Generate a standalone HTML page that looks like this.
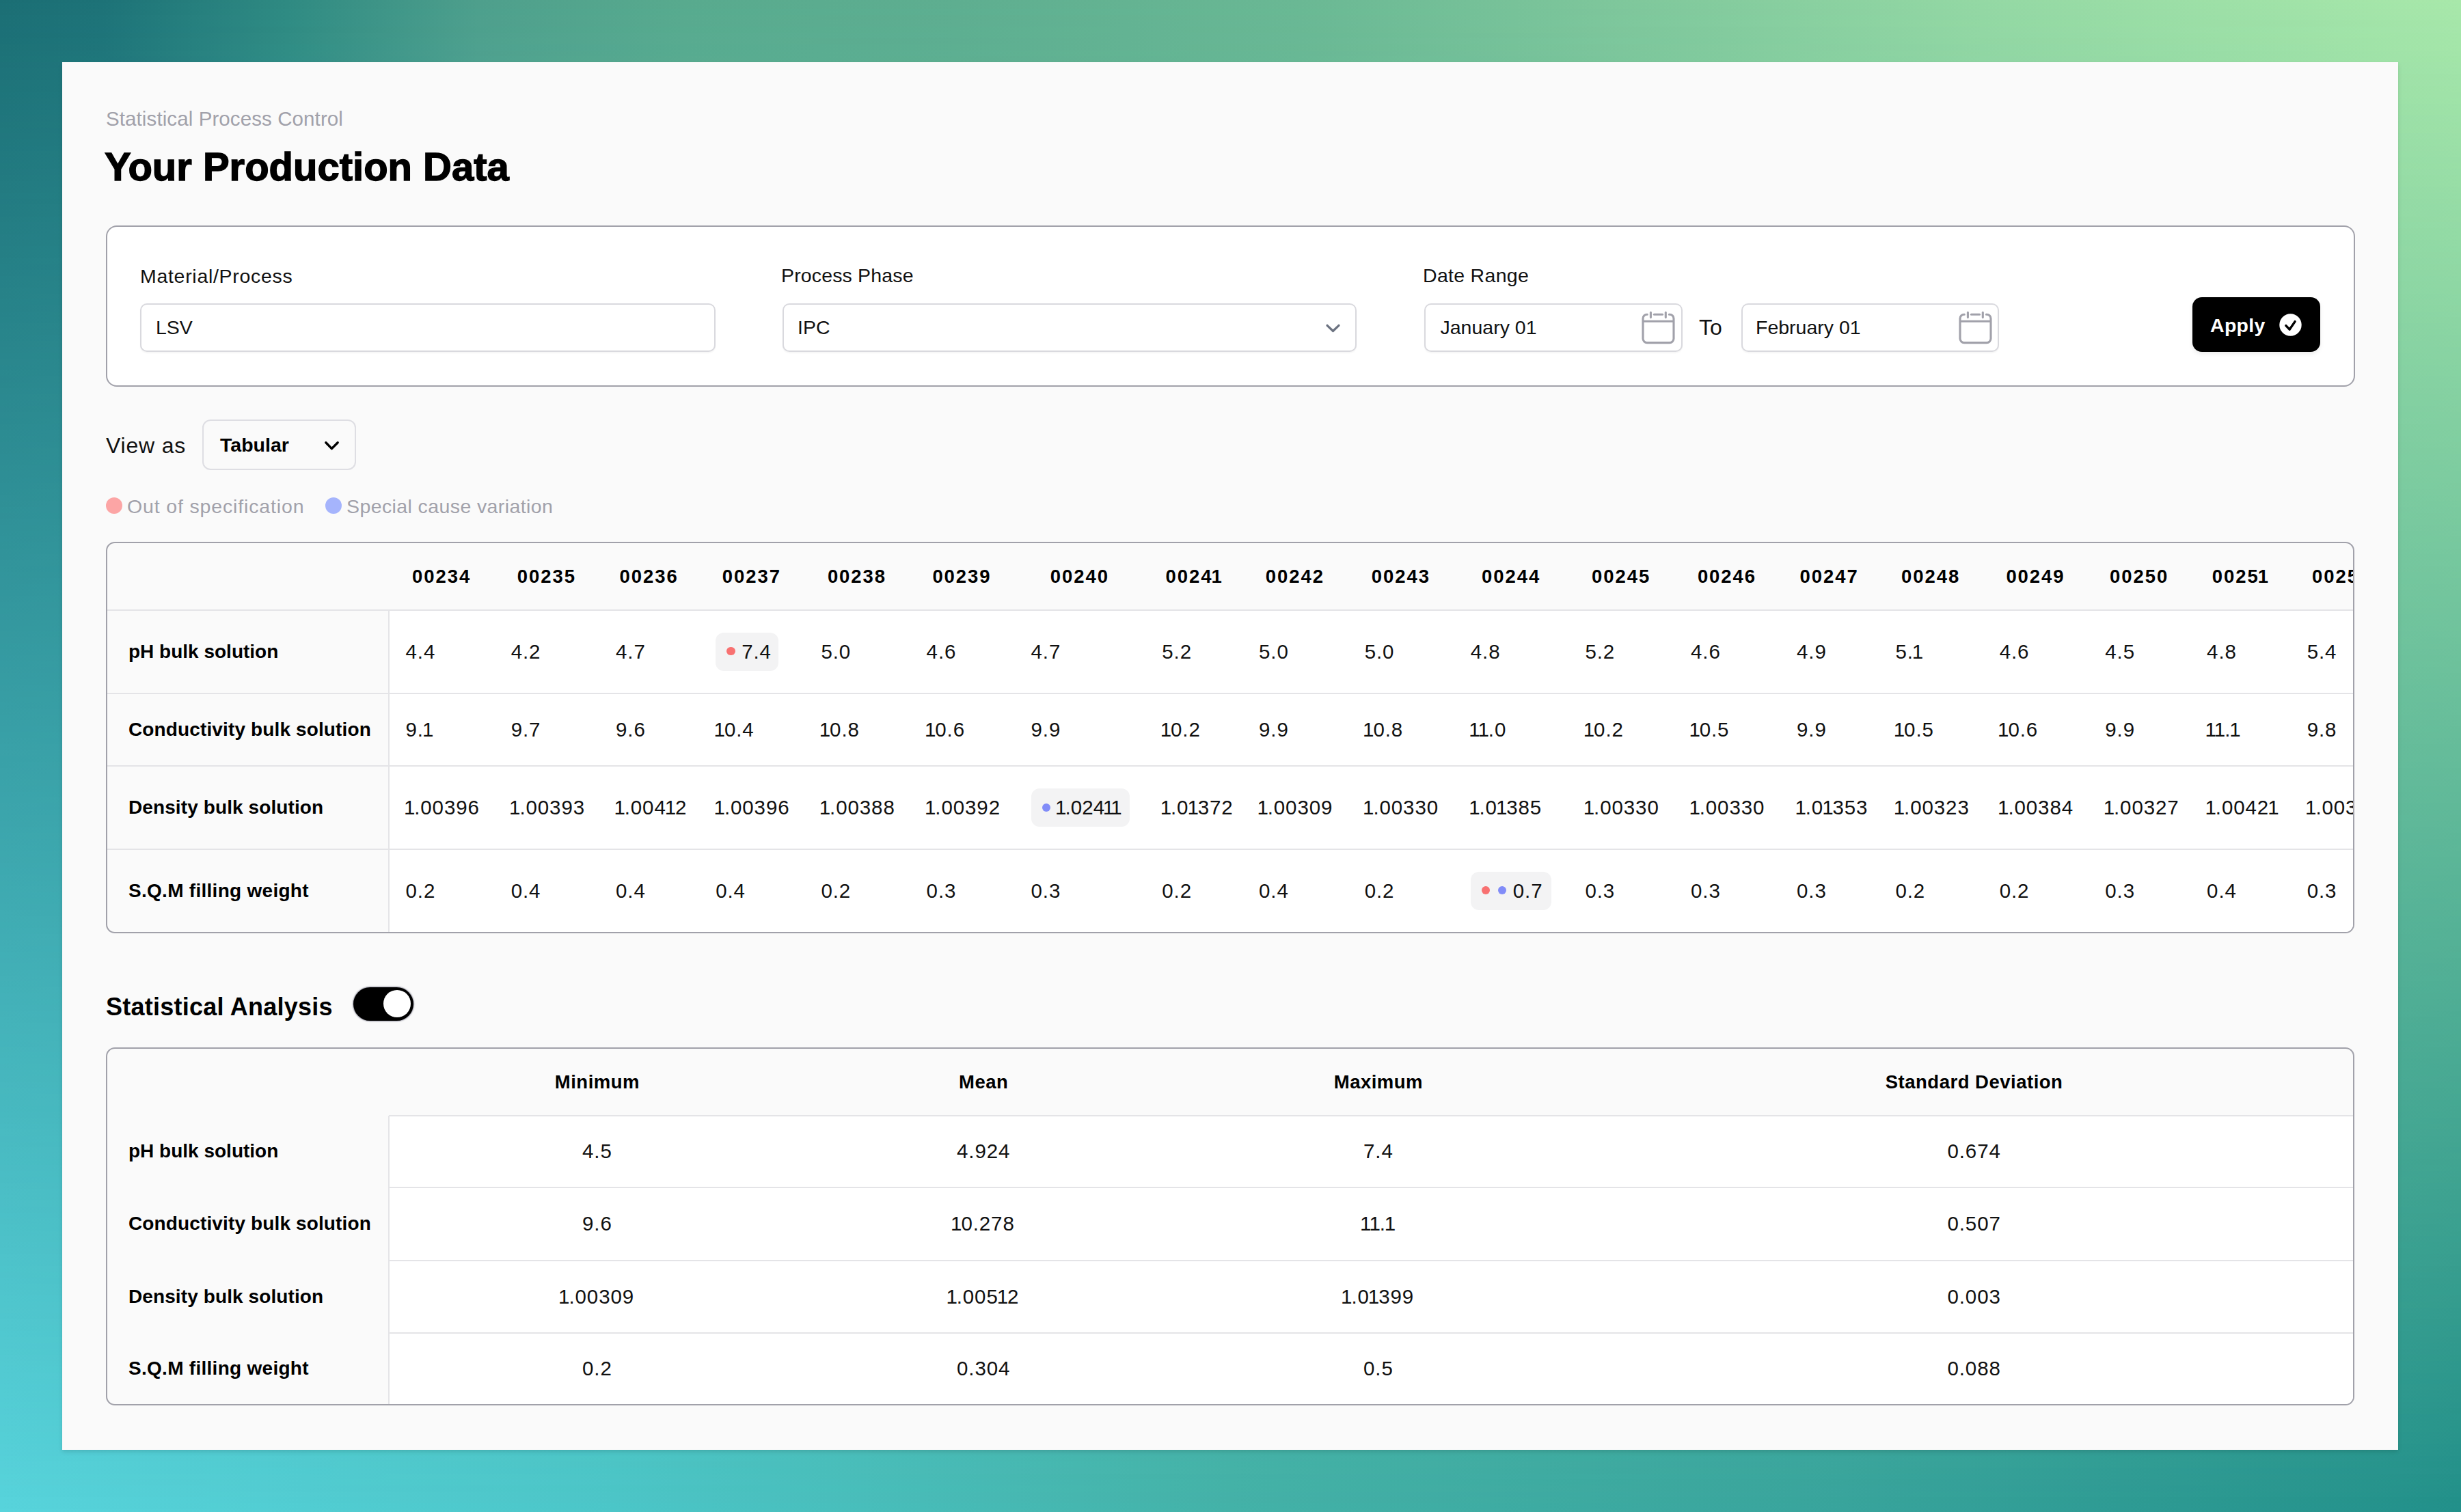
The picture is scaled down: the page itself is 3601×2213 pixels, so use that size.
<!DOCTYPE html><html><head><meta charset="utf-8"><title>Your Production Data</title><style>
*{box-sizing:border-box;margin:0;padding:0}
html,body{width:3601px;height:2213px;overflow:hidden}
body{position:relative;font-family:"Liberation Sans",sans-serif;color:#09090b;
 background:linear-gradient(to right,#58d4dc 0px,#4cc6c8 900px,#44b2a8 1800px,#38a49c 2700px,#22908a 3601px);}
.bgtop{position:absolute;left:0;top:0;width:3601px;height:2213px;
 background:linear-gradient(to right,#1b6e74 0px,#1d7277 150px,#2f8a82 420px,#4e9f8c 700px,#58aa8e 1000px,#5eae90 1400px,#6ab894 1900px,#80c89c 2400px,#94d8a4 2900px,#a8e8aa 3601px);
 -webkit-mask-image:linear-gradient(to bottom,#000 0%,rgba(0,0,0,0) 100%);mask-image:linear-gradient(to bottom,#000 0%,rgba(0,0,0,0) 100%)}
.panel{position:absolute;left:91px;top:91px;width:3418px;height:2031px;background:#fafafa;box-shadow:0 3px 6px rgba(0,0,0,.12)}
.abs{position:absolute;white-space:nowrap}
.crumb{left:155px;top:159px;font-size:29.5px;line-height:30px;color:#a1a1aa;letter-spacing:0.1px}
.title{left:153px;top:213.8px;font-size:58px;line-height:60px;font-weight:700;color:#000;letter-spacing:0px;-webkit-text-stroke:1.4px #000}
.card{position:absolute;left:154.5px;top:329.5px;width:3291px;height:236px;background:#fff;border:2px solid #a1a1aa;border-radius:16px}
.lbl{font-size:28.5px;line-height:30px;color:#111}
.inp{position:absolute;top:444px;height:71px;background:#fff;border:2px solid #d9d9de;border-radius:10px;box-shadow:0 2px 2px rgba(0,0,0,.04)}
.inp span{position:absolute;left:21px;top:18px;font-size:28.5px;line-height:30px;color:#111}
.btn{position:absolute;left:3208px;top:435px;width:187px;height:80px;background:#000;border-radius:14px;box-shadow:0 3px 6px rgba(0,0,0,.08)}
.btn span{position:absolute;left:26px;top:26px;font-size:28.5px;line-height:30px;font-weight:700;color:#fff;letter-spacing:0.3px}
.viewas{left:155px;top:634.5px;font-size:32px;line-height:34px;color:#111;letter-spacing:0.8px}
.sel2{position:absolute;left:296px;top:614px;width:225px;height:74px;border:2px solid #dedee3;border-radius:12px;background:#fafafa}
.sel2 span{position:absolute;left:24px;top:20px;font-size:28.5px;line-height:30px;font-weight:700;color:#000}
.leg{font-size:28.5px;line-height:30px;color:#a1a1aa}
.dot{position:absolute;width:24px;height:24px;border-radius:50%}
.tcard{position:absolute;left:155px;top:793px;width:3290px;height:573px;border:2px solid #a1a1aa;border-radius:13px;overflow:hidden;background:#fafafa}
.row{position:absolute;left:0;height:0}
.hline{position:absolute;left:0;right:0;height:2px;background:#e4e4e7}
.vline{position:absolute;width:2px;background:#e4e4e7}
.cell{position:absolute;font-size:29.5px;line-height:30px;color:#111;white-space:nowrap;letter-spacing:0.9px}
.hd{font-weight:700;color:#000;font-size:27.5px;letter-spacing:1.95px}
.rl{font-weight:700;color:#000;font-size:28px;letter-spacing:0}
.o1{margin:0 -2px}.o1f{margin:0 -2px 0 -2.6px}.hd .o1{margin:0 -2px}.hd .o1f{margin:0 -2px 0 -1.8px}
.tight{letter-spacing:0.1px}.tight .o1{margin:0 -2.5px}
.badge{position:absolute;height:56px;background:#f3f3f4;border-radius:12px}
.bd{position:absolute;width:12.4px;height:12.4px;border-radius:50%}
.sa{left:155px;top:1455px;font-size:36px;line-height:38px;font-weight:700;color:#000;letter-spacing:0.25px}
.tog{position:absolute;left:516.5px;top:1445px;width:88px;height:48.5px;border-radius:25px;background:#000;box-shadow:0 0 1.5px 1.2px rgba(110,110,130,.55)}
.knob{position:absolute;right:4px;top:4.3px;width:40px;height:40px;border-radius:50%;background:#fff}
.scard{position:absolute;left:155px;top:1533px;width:3290px;height:524px;border:2px solid #a1a1aa;border-radius:13px;overflow:hidden;background:#fafafa}
</style></head><body>
<div class="bgtop"></div>
<div class="panel"></div>
<div class="abs crumb">Statistical Process Control</div>
<div class="abs title">Your Production Data</div>
<div class="card"></div>
<div class="abs lbl" style="left:205px;top:388.5px;letter-spacing:0.7px">Material/Process</div>
<div class="abs lbl" style="left:1143px;top:388px;letter-spacing:0.15px">Process Phase</div>
<div class="abs lbl" style="left:2082px;top:388px;letter-spacing:0.3px">Date Range</div>
<div class="inp" style="left:205px;width:842px"><span>LSV</span></div>
<div class="inp" style="left:1145px;width:840px"><span style="left:20px">IPC</span><svg width="30" height="22" viewBox="0 0 30 22" style="position:absolute;left:788.5px;top:22.5px"><path d="M6 7.3 L14.5 15.5 L23 7.3" fill="none" stroke="#6b7280" stroke-width="3.2" stroke-linecap="round" stroke-linejoin="round"/></svg></div>
<div class="inp" style="left:2084px;width:378px"><span style="left:21.5px">January 01</span><svg width="52" height="52" viewBox="0 0 52 52" style="position:absolute;left:314.2px;top:6.3px"><g fill="none" stroke="#a1a1aa" stroke-width="3.1" stroke-linecap="round"><path d="M10.3 8.2 H10 A6 6 0 0 0 4 14.2 V43.6 A6 6 0 0 0 10 49.6 H43 A6 6 0 0 0 49 43.6 V14.2 A6 6 0 0 0 43 8.2 H42.4"/><path d="M20.4 8.2 H32.5"/><path d="M15.4 5.2 V12.6 M37.3 5.2 V12.6"/><path d="M4 18.2 H49" stroke-linecap="butt"/></g></svg></div>
<div class="abs lbl" style="left:2486px;top:464px;font-size:32px">To</div>
<div class="inp" style="left:2548px;width:377px"><span style="left:19px">February 01</span><svg width="52" height="52" viewBox="0 0 52 52" style="position:absolute;left:314.2px;top:6.3px"><g fill="none" stroke="#a1a1aa" stroke-width="3.1" stroke-linecap="round"><path d="M10.3 8.2 H10 A6 6 0 0 0 4 14.2 V43.6 A6 6 0 0 0 10 49.6 H43 A6 6 0 0 0 49 43.6 V14.2 A6 6 0 0 0 43 8.2 H42.4"/><path d="M20.4 8.2 H32.5"/><path d="M15.4 5.2 V12.6 M37.3 5.2 V12.6"/><path d="M4 18.2 H49" stroke-linecap="butt"/></g></svg></div>
<div class="btn"><span>Apply</span><svg width="33" height="33" viewBox="0 0 33 33" style="position:absolute;left:127px;top:24px"><circle cx="16.5" cy="16.5" r="16.2" fill="#fff"/><path d="M9.9 17.6 L15.1 23.2 L23.1 11.6" fill="none" stroke="#000" stroke-width="3.4" stroke-linecap="round" stroke-linejoin="round"/></svg></div>
<div class="abs viewas">View as</div>
<div class="sel2"><span>Tabular</span><svg width="36" height="24" viewBox="0 0 36 24" style="position:absolute;left:168.5px;top:22.5px"><path d="M9.85 8.8 L18.4 17.6 L27.2 8.8" fill="none" stroke="#000" stroke-width="3.4" stroke-linecap="round" stroke-linejoin="round"/></svg></div>
<div class="dot" style="left:154.5px;top:727.5px;background:#fca5a5"></div>
<div class="abs leg" style="left:186px;top:726px;letter-spacing:0.85px">Out of specification</div>
<div class="dot" style="left:475.6px;top:727.5px;background:#a5b4fc"></div>
<div class="abs leg" style="left:507px;top:726px;letter-spacing:0.4px">Special cause variation</div>
<div class="tcard">
<div style="position:absolute;left:411.5px;top:97.5px;right:0;bottom:0;background:#fff"></div>
<div class="hline" style="top:96.5px"></div>
<div class="hline" style="top:218.5px"></div>
<div class="hline" style="top:325.0px"></div>
<div class="hline" style="top:447.0px"></div>
<div class="vline" style="left:410.5px;top:97.5px;bottom:0"></div>
<div class="cell hd" style="left:489.1px;top:34.0px;width:200px;margin-left:-100px;text-align:center">00234</div>
<div class="cell hd" style="left:642.9px;top:34.0px;width:200px;margin-left:-100px;text-align:center">00235</div>
<div class="cell hd" style="left:792.6px;top:34.0px;width:200px;margin-left:-100px;text-align:center">00236</div>
<div class="cell hd" style="left:942.8px;top:34.0px;width:200px;margin-left:-100px;text-align:center">00237</div>
<div class="cell hd" style="left:1097.0px;top:34.0px;width:200px;margin-left:-100px;text-align:center">00238</div>
<div class="cell hd" style="left:1250.5px;top:34.0px;width:200px;margin-left:-100px;text-align:center">00239</div>
<div class="cell hd" style="left:1422.9px;top:34.0px;width:200px;margin-left:-100px;text-align:center">00240</div>
<div class="cell hd" style="left:1589.7px;top:34.0px;width:200px;margin-left:-100px;text-align:center">0024<span class="o1">1</span></div>
<div class="cell hd" style="left:1737.8px;top:34.0px;width:200px;margin-left:-100px;text-align:center">00242</div>
<div class="cell hd" style="left:1892.8px;top:34.0px;width:200px;margin-left:-100px;text-align:center">00243</div>
<div class="cell hd" style="left:2054.1px;top:34.0px;width:200px;margin-left:-100px;text-align:center">00244</div>
<div class="cell hd" style="left:2215.2px;top:34.0px;width:200px;margin-left:-100px;text-align:center">00245</div>
<div class="cell hd" style="left:2370.0px;top:34.0px;width:200px;margin-left:-100px;text-align:center">00246</div>
<div class="cell hd" style="left:2519.7px;top:34.0px;width:200px;margin-left:-100px;text-align:center">00247</div>
<div class="cell hd" style="left:2668.1px;top:34.0px;width:200px;margin-left:-100px;text-align:center">00248</div>
<div class="cell hd" style="left:2821.5px;top:34.0px;width:200px;margin-left:-100px;text-align:center">00249</div>
<div class="cell hd" style="left:2973.2px;top:34.0px;width:200px;margin-left:-100px;text-align:center">00250</div>
<div class="cell hd" style="left:3120.9px;top:34.0px;width:200px;margin-left:-100px;text-align:center">0025<span class="o1">1</span></div>
<div class="cell hd" style="left:3269.2px;top:34.0px;width:200px;margin-left:-100px;text-align:center">00252</div>
<div class="cell rl" style="left:31.0px;top:143.5px;letter-spacing:0px">pH bulk solution</div>
<div class="cell" style="left:436.5px;top:143.5px">4.4</div>
<div class="cell" style="left:590.7px;top:143.5px">4.2</div>
<div class="cell" style="left:744.0px;top:143.5px">4.7</div>
<div class="badge" style="left:890.2px;top:130.5px;width:92.0px"></div>
<div class="bd" style="left:906.2px;top:152.0px;background:#f87171"></div>
<div class="cell" style="left:928.2px;top:143.5px">7.4</div>
<div class="cell" style="left:1044.4px;top:143.5px">5.0</div>
<div class="cell" style="left:1198.6px;top:143.5px">4.6</div>
<div class="cell" style="left:1351.5px;top:143.5px">4.7</div>
<div class="cell" style="left:1543.3px;top:143.5px">5.2</div>
<div class="cell" style="left:1685.0px;top:143.5px">5.0</div>
<div class="cell" style="left:1839.7px;top:143.5px">5.0</div>
<div class="cell" style="left:1994.8px;top:143.5px">4.8</div>
<div class="cell" style="left:2162.4px;top:143.5px">5.2</div>
<div class="cell" style="left:2317.0px;top:143.5px">4.6</div>
<div class="cell" style="left:2472.0px;top:143.5px">4.9</div>
<div class="cell" style="left:2616.4px;top:143.5px">5.<span class="o1">1</span></div>
<div class="cell" style="left:2768.7px;top:143.5px">4.6</div>
<div class="cell" style="left:2923.3px;top:143.5px">4.5</div>
<div class="cell" style="left:3072.1px;top:143.5px">4.8</div>
<div class="cell" style="left:3218.7px;top:143.5px">5.4</div>
<div class="cell rl" style="left:31.0px;top:257.8px;letter-spacing:0.13px">Conductivity bulk solution</div>
<div class="cell" style="left:436.5px;top:257.8px">9.<span class="o1">1</span></div>
<div class="cell" style="left:590.7px;top:257.8px">9.7</div>
<div class="cell" style="left:744.0px;top:257.8px">9.6</div>
<div class="cell" style="left:890.2px;top:257.8px"><span class="o1f">1</span>0.4</div>
<div class="cell" style="left:1044.4px;top:257.8px"><span class="o1f">1</span>0.8</div>
<div class="cell" style="left:1198.6px;top:257.8px"><span class="o1f">1</span>0.6</div>
<div class="cell" style="left:1351.5px;top:257.8px">9.9</div>
<div class="cell" style="left:1543.3px;top:257.8px"><span class="o1f">1</span>0.2</div>
<div class="cell" style="left:1685.0px;top:257.8px">9.9</div>
<div class="cell" style="left:1839.7px;top:257.8px"><span class="o1f">1</span>0.8</div>
<div class="cell" style="left:1994.8px;top:257.8px"><span class="o1f">1</span><span class="o1">1</span>.0</div>
<div class="cell" style="left:2162.4px;top:257.8px"><span class="o1f">1</span>0.2</div>
<div class="cell" style="left:2317.0px;top:257.8px"><span class="o1f">1</span>0.5</div>
<div class="cell" style="left:2472.0px;top:257.8px">9.9</div>
<div class="cell" style="left:2616.4px;top:257.8px"><span class="o1f">1</span>0.5</div>
<div class="cell" style="left:2768.7px;top:257.8px"><span class="o1f">1</span>0.6</div>
<div class="cell" style="left:2923.3px;top:257.8px">9.9</div>
<div class="cell" style="left:3072.1px;top:257.8px"><span class="o1f">1</span><span class="o1">1</span>.<span class="o1">1</span></div>
<div class="cell" style="left:3218.7px;top:257.8px">9.8</div>
<div class="cell rl" style="left:31.0px;top:372.0px;letter-spacing:0.1px">Density bulk solution</div>
<div class="cell" style="left:436.5px;top:372.0px"><span class="o1f">1</span>.00396</div>
<div class="cell" style="left:590.7px;top:372.0px"><span class="o1f">1</span>.00393</div>
<div class="cell" style="left:744.0px;top:372.0px"><span class="o1f">1</span>.004<span class="o1">1</span>2</div>
<div class="cell" style="left:890.2px;top:372.0px"><span class="o1f">1</span>.00396</div>
<div class="cell" style="left:1044.4px;top:372.0px"><span class="o1f">1</span>.00388</div>
<div class="cell" style="left:1198.6px;top:372.0px"><span class="o1f">1</span>.00392</div>
<div class="badge" style="left:1351.5px;top:359.0px;width:144.4px"></div>
<div class="bd" style="left:1367.5px;top:380.5px;background:#818cf8"></div>
<div class="cell tight" style="left:1389.5px;top:372.0px"><span class="o1f">1</span>.024<span class="o1">1</span><span class="o1">1</span></div>
<div class="cell" style="left:1543.3px;top:372.0px"><span class="o1f">1</span>.0<span class="o1">1</span>372</div>
<div class="cell" style="left:1685.0px;top:372.0px"><span class="o1f">1</span>.00309</div>
<div class="cell" style="left:1839.7px;top:372.0px"><span class="o1f">1</span>.00330</div>
<div class="cell" style="left:1994.8px;top:372.0px"><span class="o1f">1</span>.0<span class="o1">1</span>385</div>
<div class="cell" style="left:2162.4px;top:372.0px"><span class="o1f">1</span>.00330</div>
<div class="cell" style="left:2317.0px;top:372.0px"><span class="o1f">1</span>.00330</div>
<div class="cell" style="left:2472.0px;top:372.0px"><span class="o1f">1</span>.0<span class="o1">1</span>353</div>
<div class="cell" style="left:2616.4px;top:372.0px"><span class="o1f">1</span>.00323</div>
<div class="cell" style="left:2768.7px;top:372.0px"><span class="o1f">1</span>.00384</div>
<div class="cell" style="left:2923.3px;top:372.0px"><span class="o1f">1</span>.00327</div>
<div class="cell" style="left:3072.1px;top:372.0px"><span class="o1f">1</span>.0042<span class="o1">1</span></div>
<div class="cell" style="left:3218.7px;top:372.0px"><span class="o1f">1</span>.00335</div>
<div class="cell rl" style="left:31.0px;top:493.5px;letter-spacing:0.28px">S.Q.M filling weight</div>
<div class="cell" style="left:436.5px;top:493.5px">0.2</div>
<div class="cell" style="left:590.7px;top:493.5px">0.4</div>
<div class="cell" style="left:744.0px;top:493.5px">0.4</div>
<div class="cell" style="left:890.2px;top:493.5px">0.4</div>
<div class="cell" style="left:1044.4px;top:493.5px">0.2</div>
<div class="cell" style="left:1198.6px;top:493.5px">0.3</div>
<div class="cell" style="left:1351.5px;top:493.5px">0.3</div>
<div class="cell" style="left:1543.3px;top:493.5px">0.2</div>
<div class="cell" style="left:1685.0px;top:493.5px">0.4</div>
<div class="cell" style="left:1839.7px;top:493.5px">0.2</div>
<div class="badge" style="left:1994.8px;top:480.5px;width:118.4px"></div>
<div class="bd" style="left:2010.8px;top:502.0px;background:#f87171"></div>
<div class="bd" style="left:2034.8px;top:502.0px;background:#818cf8"></div>
<div class="cell" style="left:2056.8px;top:493.5px">0.7</div>
<div class="cell" style="left:2162.4px;top:493.5px">0.3</div>
<div class="cell" style="left:2317.0px;top:493.5px">0.3</div>
<div class="cell" style="left:2472.0px;top:493.5px">0.3</div>
<div class="cell" style="left:2616.4px;top:493.5px">0.2</div>
<div class="cell" style="left:2768.7px;top:493.5px">0.2</div>
<div class="cell" style="left:2923.3px;top:493.5px">0.3</div>
<div class="cell" style="left:3072.1px;top:493.5px">0.4</div>
<div class="cell" style="left:3218.7px;top:493.5px">0.3</div>
</div>
<div class="abs sa">Statistical Analysis</div>
<div class="tog"><div class="knob"></div></div>
<div class="scard">
<div style="position:absolute;left:411.5px;top:97.5px;right:0;bottom:0;background:#fff"></div>
<div class="hline" style="left:411.5px;top:96.5px"></div>
<div class="hline" style="left:411.5px;top:202.0px"></div>
<div class="hline" style="left:411.5px;top:308.5px"></div>
<div class="hline" style="left:411.5px;top:414.5px"></div>
<div class="vline" style="left:410.5px;top:97.5px;bottom:0"></div>
<div class="cell hd" style="left:716.9px;top:34.0px;width:400px;margin-left:-200px;text-align:center;letter-spacing:0.5px">Minimum</div>
<div class="cell hd" style="left:1282.2px;top:34.0px;width:400px;margin-left:-200px;text-align:center;letter-spacing:0.5px">Mean</div>
<div class="cell hd" style="left:1859.9px;top:34.0px;width:400px;margin-left:-200px;text-align:center;letter-spacing:0.5px">Maximum</div>
<div class="cell hd" style="left:2731.6px;top:34.0px;width:400px;margin-left:-200px;text-align:center;letter-spacing:0.5px">Standard Deviation</div>
<div class="cell rl" style="left:31.0px;top:135.2px;letter-spacing:0px">pH bulk solution</div>
<div class="cell" style="left:716.9px;top:135.2px;width:400px;margin-left:-200px;text-align:center">4.5</div>
<div class="cell" style="left:1282.2px;top:135.2px;width:400px;margin-left:-200px;text-align:center">4.924</div>
<div class="cell" style="left:1859.9px;top:135.2px;width:400px;margin-left:-200px;text-align:center">7.4</div>
<div class="cell" style="left:2731.6px;top:135.2px;width:400px;margin-left:-200px;text-align:center">0.674</div>
<div class="cell rl" style="left:31.0px;top:241.2px;letter-spacing:0.13px">Conductivity bulk solution</div>
<div class="cell" style="left:716.9px;top:241.2px;width:400px;margin-left:-200px;text-align:center">9.6</div>
<div class="cell" style="left:1282.2px;top:241.2px;width:400px;margin-left:-200px;text-align:center"><span class="o1f">1</span>0.278</div>
<div class="cell" style="left:1859.9px;top:241.2px;width:400px;margin-left:-200px;text-align:center"><span class="o1f">1</span><span class="o1">1</span>.<span class="o1">1</span></div>
<div class="cell" style="left:2731.6px;top:241.2px;width:400px;margin-left:-200px;text-align:center">0.507</div>
<div class="cell rl" style="left:31.0px;top:347.5px;letter-spacing:0.1px">Density bulk solution</div>
<div class="cell" style="left:716.9px;top:347.5px;width:400px;margin-left:-200px;text-align:center"><span class="o1f">1</span>.00309</div>
<div class="cell" style="left:1282.2px;top:347.5px;width:400px;margin-left:-200px;text-align:center"><span class="o1f">1</span>.005<span class="o1">1</span>2</div>
<div class="cell" style="left:1859.9px;top:347.5px;width:400px;margin-left:-200px;text-align:center"><span class="o1f">1</span>.0<span class="o1">1</span>399</div>
<div class="cell" style="left:2731.6px;top:347.5px;width:400px;margin-left:-200px;text-align:center">0.003</div>
<div class="cell rl" style="left:31.0px;top:453.2px;letter-spacing:0.28px">S.Q.M filling weight</div>
<div class="cell" style="left:716.9px;top:453.2px;width:400px;margin-left:-200px;text-align:center">0.2</div>
<div class="cell" style="left:1282.2px;top:453.2px;width:400px;margin-left:-200px;text-align:center">0.304</div>
<div class="cell" style="left:1859.9px;top:453.2px;width:400px;margin-left:-200px;text-align:center">0.5</div>
<div class="cell" style="left:2731.6px;top:453.2px;width:400px;margin-left:-200px;text-align:center">0.088</div>
</div>
</body></html>
